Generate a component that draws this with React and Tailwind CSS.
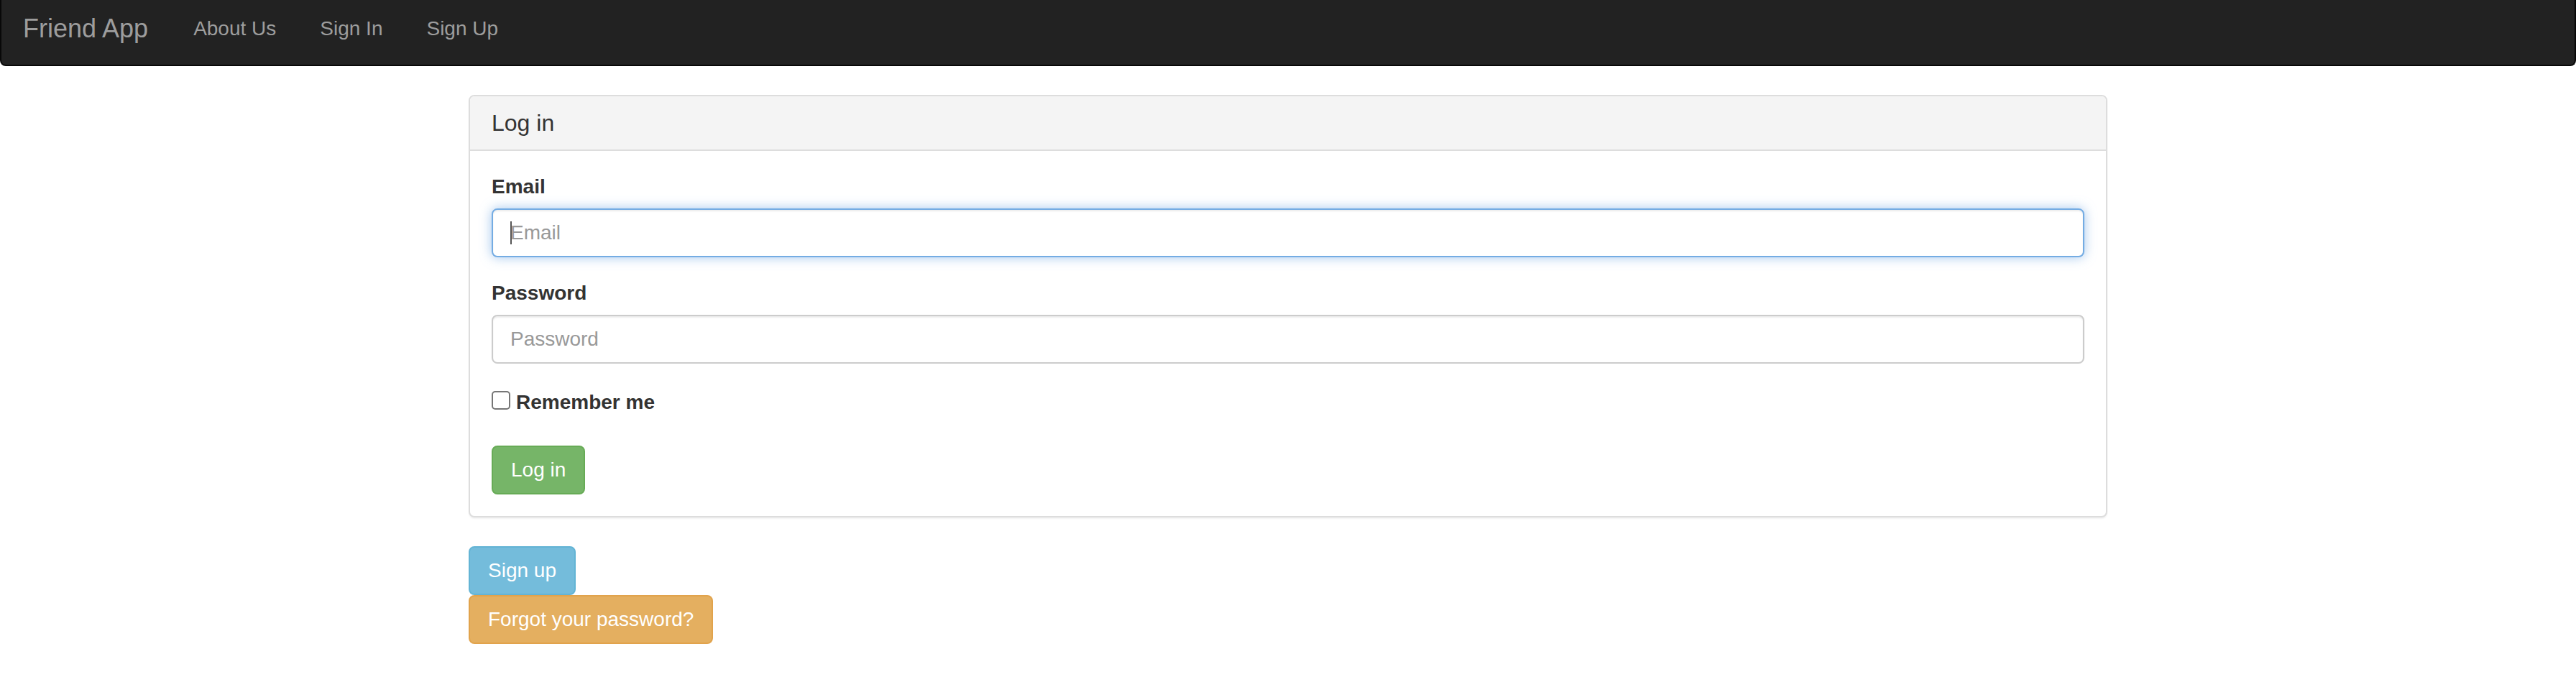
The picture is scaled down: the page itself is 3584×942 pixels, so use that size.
const navLinks = ["About Us", "Sign In", "Sign Up"];

const inputBase =
  "block h-[68px] w-full rounded-lg border-2 bg-white px-6 text-[28px] leading-10 text-[#555] placeholder:text-[#999] placeholder:opacity-100 outline-none";

const buttonBase =
  "block w-fit rounded-lg border-2 px-[25px] py-3 text-center text-[28px] leading-10 text-white";

function NavBar() {
  return (
    <nav className="flex gap-[3px] rounded-b-lg border-x-2 border-b-2 border-[#080808] bg-[#222] text-[#9d9d9d]">
      <a href="#home" className="px-[30px] pt-5 pb-[30px] text-4xl leading-10">
        Friend App
      </a>
      <ul className="flex gap-px">
        {navLinks.map((label) => (
          <li key={label}>
            <a href="#nav" className="block px-[30px] pt-5 pb-[30px] text-[28px] leading-10">
              {label}
            </a>
          </li>
        ))}
      </ul>
    </nav>
  );
}

function LoginPanel() {
  return (
    <section className="rounded-lg border-2 border-[#ddd] bg-white shadow-[0_2px_2px_rgba(0,0,0,0.05)]">
      <header className="rounded-t-md border-b-2 border-[#ddd] bg-[#f4f4f4] px-[30px] py-5">
        <h3 className="text-[32px] leading-[34px] font-medium">Log in</h3>
      </header>
      <form className="p-[30px]" onSubmit={(e) => e.preventDefault()}>
        <div className="mb-[30px]">
          <label htmlFor="email" className="mb-2.5 block w-fit font-bold">
            Email
          </label>
          <div className="relative">
            <input
              id="email"
              type="email"
              placeholder="Email"
              className={`${inputBase} border-[#74ace3] shadow-[inset_0_2px_2px_rgba(0,0,0,0.075),0_0_16px_rgba(102,160,225,0.6)]`}
            />
            <span
              aria-hidden="true"
              className="pointer-events-none absolute top-[18px] left-[26px] h-8 w-0.5 bg-[#555]"
            />
          </div>
        </div>
        <div className="mb-[34px]">
          <label htmlFor="password" className="mb-2.5 block w-fit font-bold">
            Password
          </label>
          <input
            id="password"
            type="password"
            placeholder="Password"
            className={`${inputBase} border-[#ccc] shadow-[inset_0_2px_2px_rgba(0,0,0,0.075)]`}
          />
        </div>
        <div className="mb-10 flex items-start gap-2">
          <input
            id="remember"
            type="checkbox"
            className="mt-1 size-[26px] appearance-none rounded-[5px] border-2 border-[#767676] bg-white checked:bg-[#767676]"
          />
          <label htmlFor="remember" className="font-bold">
            Remember me
          </label>
        </div>
        <button type="submit" className={`${buttonBase} border-[#67ab56] bg-[#76b568]`}>
          Log in
        </button>
      </form>
    </section>
  );
}

export default function App() {
  return (
    <div className="bg-white font-['Liberation_Sans',Arial,sans-serif] text-[28px] leading-10 text-[#333]">
      <NavBar />
      <main className="mx-auto max-w-[2340px] px-[30px] pt-10 pb-[46px]">
        <LoginPanel />
        <div className="mt-10">
          <a href="#signup" className={`${buttonBase} border-[#63b4d5] bg-[#74bcdb]`}>
            Sign up
          </a>
          <a href="#forgot" className={`${buttonBase} border-[#e1a34c] bg-[#e4af60]`}>
            Forgot your password?
          </a>
        </div>
      </main>
    </div>
  );
}
